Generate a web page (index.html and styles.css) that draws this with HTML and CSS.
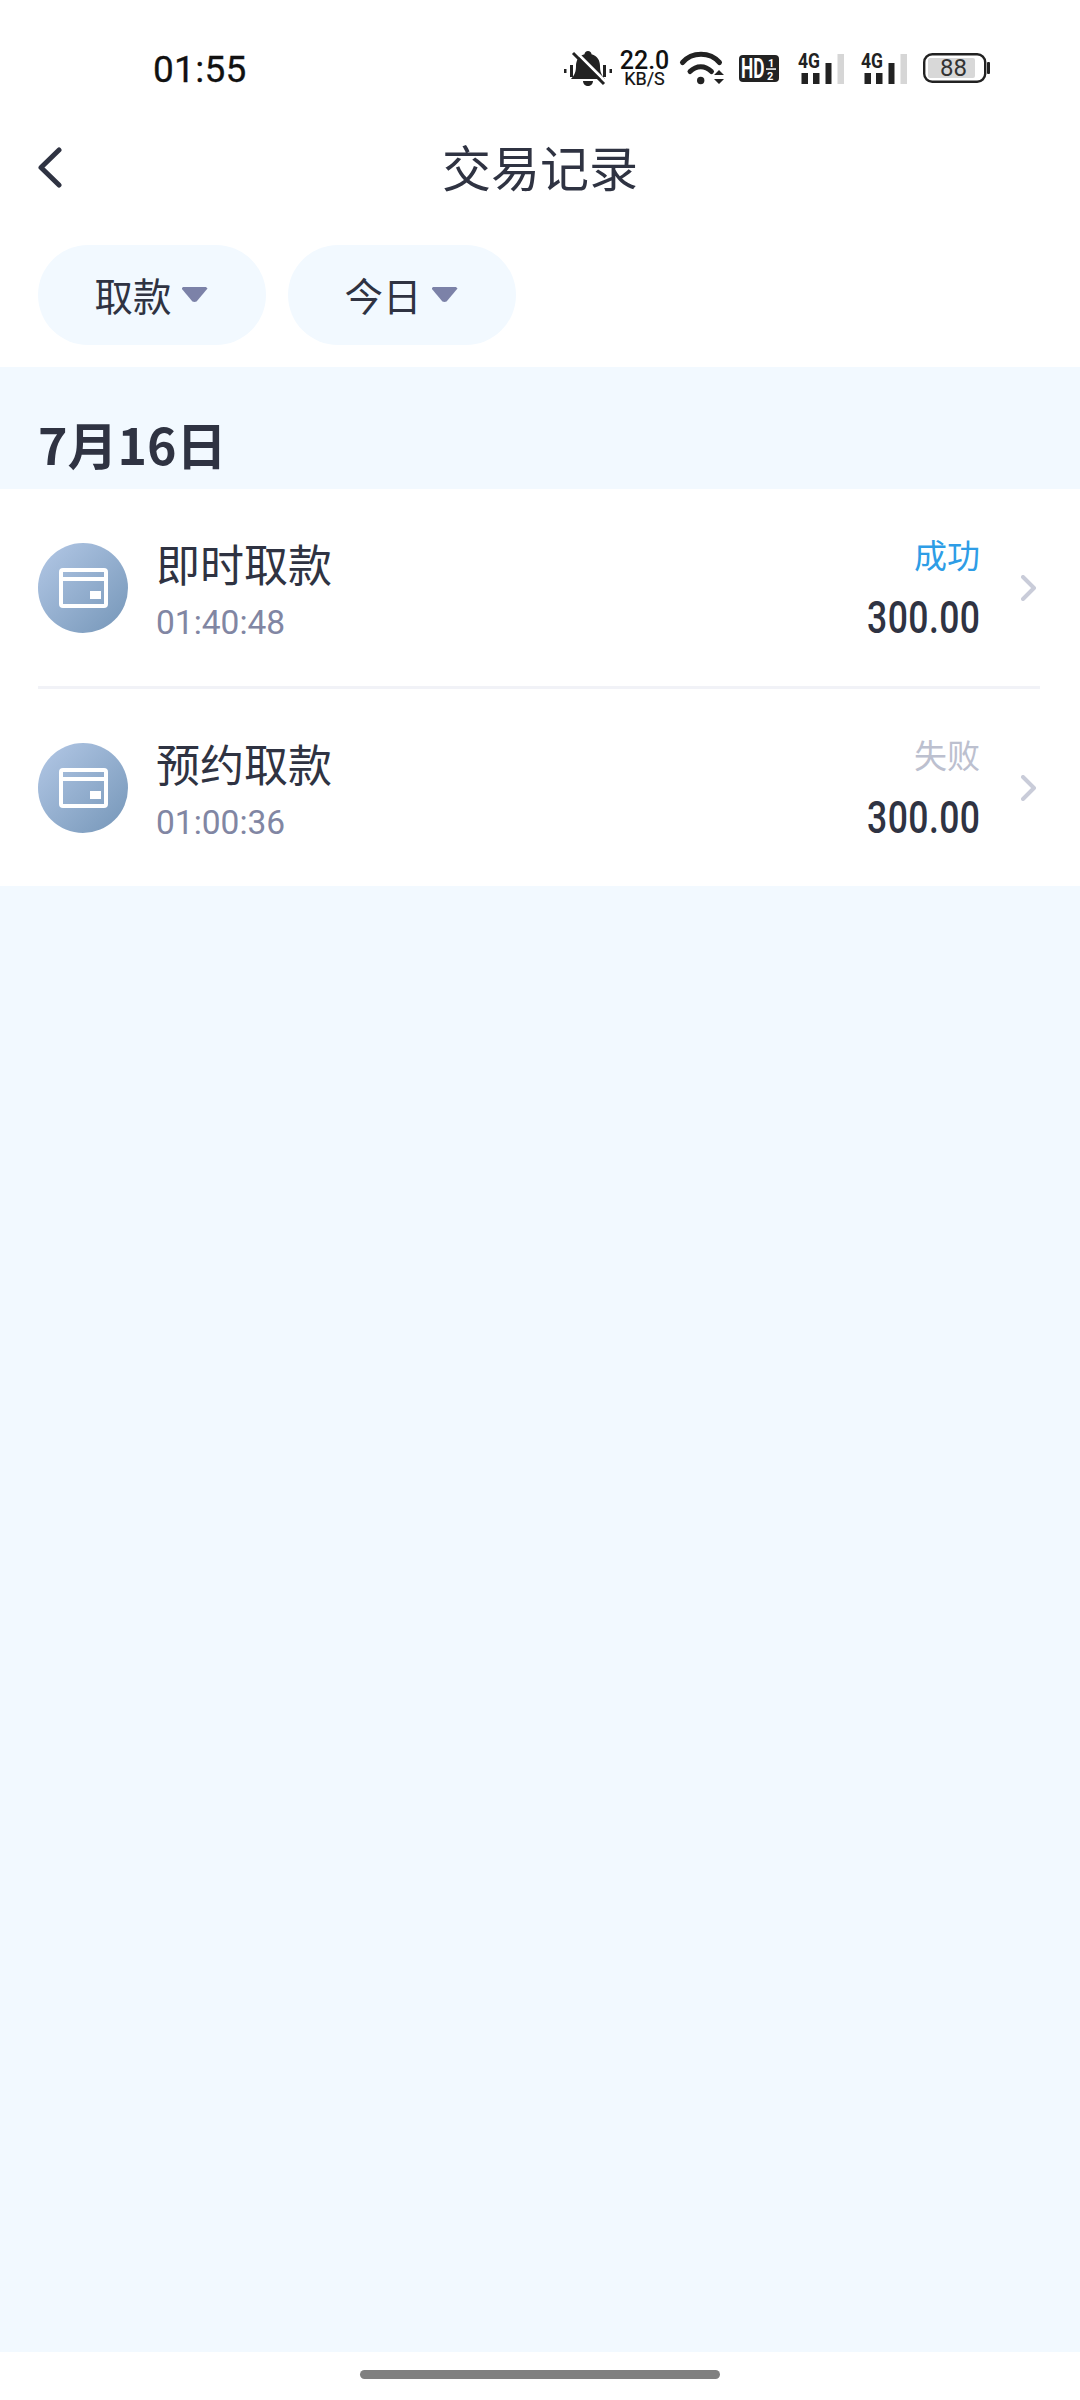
FILE: index.html
```html
<!DOCTYPE html>
<html lang="zh-CN">
<head>
<meta charset="utf-8">
<title>交易记录</title>
<link rel="stylesheet" href="styles.css">
</head>
<body>
<div class="page">
  <header class="top">
    <div class="statusbar">
      <span class="clock">01:55</span>
      <div class="indicators">
        <svg class="ind-bell" viewBox="0 0 48 35">
          <path class="ink" d="M0 18h2.500v4H0zM6 14h3v12H6zM39 14h3v12h-3zM45.500 18H48v4h-2.500z"/>
          <path class="ink" d="M24 0c2 0 3.500 1.500 3.500 3.200C33.500 5 36 9.500 36 15c0 6 1.500 9 5 13H7c3.500-4 5-7 5-13 0-5.500 2.500-10 8.500-11.800C20.500 1.500 22 0 24 0zM19 30h10c0 3-2.500 5-5 5s-5-2-5-5z"/>
          <path class="bell-gap" d="M11 0 42 31"/>
          <path class="bell-slash" d="M9 2 40 33"/>
        </svg>
        <div class="speed ind-speed"><span class="speed-num">22.0</span><span class="speed-unit">KB/S</span></div>
        <svg class="ind-wifi" viewBox="0 0 44 34">
          <path class="arc" d="M2.500 11.500C12 .5 30 .5 39.500 11.500"/>
          <path class="arc" d="M10 20.500c6.500-6.500 15-6.500 21.500 0"/>
          <circle class="ink" cx="20.700" cy="29.500" r="3.700"/>
          <path class="ink" d="m39 19 5 5H34zM39 33l-5-5h10z"/>
        </svg>
        <svg class="ind-hd" viewBox="0 0 40 27">
          <rect class="ink" width="40" height="27" rx="4"/>
          <text class="hd-text" transform="translate(2 22.500) scale(.64 1)">HD</text>
          <text class="hd-sub" x="29" y="12">1</text>
          <rect class="hd-line" x="27" y="13.300" width="10" height="1.500"/>
          <text class="hd-sub" x="28" y="25">2</text>
        </svg>
        <svg class="ind-sig" viewBox="0 0 46 31">
          <text class="sig-text" x="0" y="15" textLength="22" lengthAdjust="spacingAndGlyphs">4G</text>
          <path class="ink" d="M3.500 20H10v11H3.500zM15 20h6.500v11H15zM27.500 10H33.500v21h-6z"/>
          <rect class="sig-off" x="39.500" y="1" width="6.500" height="30"/>
        </svg>
        <svg class="ind-sig ind-sig-b" viewBox="0 0 46 31">
          <text class="sig-text" x="0" y="15" textLength="22" lengthAdjust="spacingAndGlyphs">4G</text>
          <path class="ink" d="M3.500 20H10v11H3.500zM15 20h6.500v11H15zM27.500 10H33.500v21h-6z"/>
          <rect class="sig-off" x="39.500" y="1" width="6.500" height="30"/>
        </svg>
        <svg class="ind-bat" viewBox="0 0 67 30">
          <rect class="bat-shell" x="1.200" y="1.200" width="61" height="27.600" rx="8"/>
          <rect class="bat-level" x="5" y="5" width="47" height="20" rx="2"/>
          <rect class="ink" x="64" y="9" width="3" height="12" rx="1"/>
          <text class="bat-text" x="30.500" y="23">88</text>
        </svg>
      </div>
    </div>
    <nav class="navbar">
      <svg class="back" viewBox="0 0 25 41"><path d="M22 3 4 20.500 22 38"/></svg>
      <h1 class="nav-title">交易记录</h1>
    </nav>
    <div class="filters">
      <button class="pill">取款<i class="caret"></i></button>
      <button class="pill">今日<i class="caret"></i></button>
    </div>
  </header>

  <main class="records">
    <h2 class="date">7月16日</h2>
    <ul class="list">
      <li class="row">
        <span class="avatar">
          <svg class="card" viewBox="0 0 49 40"><rect x="2" y="2" width="45" height="36" rx="2"/><path class="card-bar" d="M2 11h45"/><rect class="card-chip" x="31" y="23" width="11" height="8"/></svg>
        </span>
        <div class="info">
          <div class="name">即时取款</div>
          <div class="time">01:40:48</div>
        </div>
        <div class="result">
          <div class="state state-ok">成功</div>
          <div class="amount">300.00</div>
        </div>
        <svg class="more" viewBox="0 0 16 26"><path d="M2 2l11 11L2 24"/></svg>
      </li>
      <li class="row">
        <span class="avatar">
          <svg class="card" viewBox="0 0 49 40"><rect x="2" y="2" width="45" height="36" rx="2"/><path class="card-bar" d="M2 11h45"/><rect class="card-chip" x="31" y="23" width="11" height="8"/></svg>
        </span>
        <div class="info">
          <div class="name">预约取款</div>
          <div class="time">01:00:36</div>
        </div>
        <div class="result">
          <div class="state state-fail">失败</div>
          <div class="amount">300.00</div>
        </div>
        <svg class="more" viewBox="0 0 16 26"><path d="M2 2l11 11L2 24"/></svg>
      </li>
    </ul>
  </main>

  <footer class="gesture"><span class="gesture-bar"></span></footer>
</div>
</body>
</html>
```
FILE: styles.css
```css
* { box-sizing: border-box; }

html, body {
  margin: 0;
  padding: 0;
  background: #fff;
}

.page {
  width: 1080px;
  height: 2400px;
  display: flex;
  flex-direction: column;
  font-family: "Noto Sans CJK SC", "Noto Sans", sans-serif;
  color: #2f3342;
}

/* status bar */
.statusbar {
  height: 136px;
  padding: 2px 90px 0 153px;
  display: flex;
  align-items: center;
  justify-content: space-between;
}

.clock {
  font: 400 37px/1 Roboto, sans-serif;
  color: #111;
  letter-spacing: .3px;
  -webkit-text-stroke: .3px #111;
}

.indicators {
  display: flex;
  align-items: center;
  height: 36px;
  margin-top: -2px;
}

.indicators svg { overflow: visible; }

.ink { fill: #222; }
.ind-bell { width: 48px; height: 35px; }
.ind-speed { margin-left: 9px; }
.ind-wifi { width: 44px; height: 34px; margin-left: 12px; }
.ind-hd { width: 40px; height: 27px; margin-left: 15px; }
.ind-sig { width: 46px; height: 31px; margin-left: 19px; }
.ind-sig-b { margin-left: 17px; }
.ind-bat { width: 67px; height: 30px; margin-left: 16px; }

.bell-gap { stroke: #fff; stroke-width: 3; fill: none; }
.bell-slash { stroke: #222; stroke-width: 3; fill: none; }

.speed {
  width: 47px;
  display: flex;
  flex-direction: column;
  align-items: center;
  font-family: Roboto, sans-serif;
  color: #111;
}

.speed-num { font-size: 25px; line-height: 21px; font-weight: 500; }
.speed-unit { font-size: 18px; line-height: 15px; font-weight: 400; -webkit-text-stroke: .2px #111; }

.arc { fill: none; stroke: #222; stroke-width: 5; stroke-linecap: round; }

.hd-text { font: 700 27px Roboto, sans-serif; fill: #fff; }
.hd-sub { font: 700 11px Roboto, sans-serif; fill: #fff; }
.hd-line { fill: #fff; }

.sig-text { font: 700 21px Roboto, sans-serif; fill: #222; }
.sig-off { fill: #d6d6d6; }

.bat-shell { fill: none; stroke: #222; stroke-width: 2.400; }
.bat-level { fill: #d8d8d8; }
.bat-text { font: 400 24px Roboto, sans-serif; fill: #333; text-anchor: middle; }

/* title row */
.navbar {
  height: 68px;
  padding: 0 38px;
  display: grid;
  grid-template-columns: 1fr auto 1fr;
  align-items: center;
}

.back {
  width: 25px;
  height: 41px;
  margin-top: -6px;
  margin-left: -1px;
  fill: none;
  stroke: #2f3342;
  stroke-width: 5;
  stroke-linecap: round;
  stroke-linejoin: round;
}

.nav-title {
  margin: -8px 0 0;
  font-size: 49px;
  line-height: 68px;
  font-weight: 400;
}

/* filter pills */
.filters {
  display: flex;
  gap: 22px;
  padding: 41px 38px 22px;
}

.pill {
  width: 228px;
  height: 100px;
  border: 0;
  padding: 0 2px 2px 0;
  border-radius: 50px;
  background: #f2f9ff;
  display: flex;
  align-items: center;
  justify-content: center;
  gap: 10px;
  font: 400 38.500px/1 "Noto Sans CJK SC", sans-serif;
  color: #2f3342;
}

.caret {
  width: 26px;
  height: 15px;
  margin-top: 1px;
  background: #7c82a8;
  clip-path: polygon(0 10%, 6% 0, 94% 0, 100% 10%, 58% 96%, 50% 100%, 42% 96%);
}

/* day group */
.records {
  flex: 1;
  background: #f2f9ff;
}

.date {
  margin: 0;
  height: 122px;
  padding: 46px 38px 0;
  font-size: 50px;
  line-height: 60px;
  font-weight: 700;
}

.list {
  margin: 0;
  padding: 0 40px 0 38px;
  list-style: none;
  background: #fff;
}

.row {
  height: 197px;
  display: flex;
  align-items: center;
}

.row + .row {
  height: 200px;
  border-top: 3px solid #f1f2f7;
}

.avatar {
  width: 90px;
  height: 90px;
  flex: none;
  border-radius: 50%;
  background: linear-gradient(135deg, #b3c8e6, #7596b8);
  display: flex;
  align-items: center;
  justify-content: center;
}

.card { width: 49px; height: 40px; fill: none; stroke: #fff; stroke-width: 4; }
.card-bar { stroke-width: 4; }
.card-chip { fill: #fff; stroke: none; }

.info { margin-left: 28px; flex: 1; }

.name {
  font-size: 44px;
  line-height: 56px;
}

.time {
  margin-top: 14px;
  font: 400 33.500px/36px Roboto, sans-serif;
  color: #8186a3;
}

.result { text-align: right; }

.state {
  font-size: 33px;
  line-height: 40px;
  margin-top: -2px;
}

.state-ok { color: #2e9de6; }
.state-fail { color: #bcc0cf; }

.amount {
  margin-top: 22px;
  font: 500 45px/44px Roboto, sans-serif;
  letter-spacing: .5px;
  transform: scaleX(.79);
  transform-origin: right center;
}

.more {
  width: 16px;
  height: 26px;
  margin-left: 41px;
  margin-right: 3px;
  fill: none;
  stroke: #c9ccd9;
  stroke-width: 4;
  stroke-linecap: round;
  stroke-linejoin: round;
}

/* gesture area */
.gesture {
  height: 48px;
  padding-top: 18px;
  display: flex;
  justify-content: center;
  background: #fff;
}

.gesture-bar {
  width: 360px;
  height: 9px;
  border-radius: 5px;
  background: #808080;
}
```
